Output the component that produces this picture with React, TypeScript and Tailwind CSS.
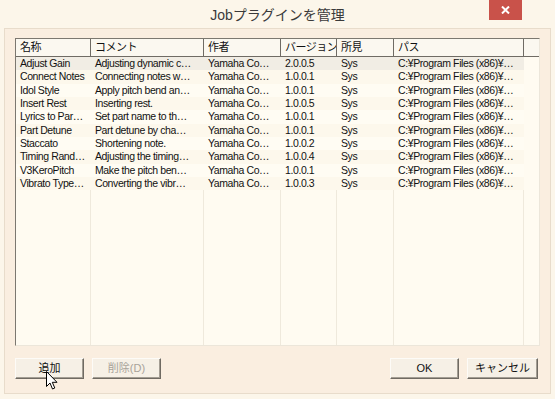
const cols = [
  { label: "名称", w: "w-[75px]" },
  { label: "コメント", w: "w-[113px]" },
  { label: "作者", w: "w-[77px]" },
  { label: "バージョン", w: "w-[56px]" },
  { label: "所見", w: "w-[57px]" },
  { label: "パス", w: "w-[130px]" },
];

const rows = [
  ["Adjust Gain", "Adjusting dynamic c…", "Yamaha Co…", "2.0.0.5", "Sys", "C:¥Program Files (x86)¥…"],
  ["Connect Notes", "Connecting notes w…", "Yamaha Co…", "1.0.0.1", "Sys", "C:¥Program Files (x86)¥…"],
  ["Idol Style", "Apply pitch bend an…", "Yamaha Co…", "1.0.0.1", "Sys", "C:¥Program Files (x86)¥…"],
  ["Insert Rest", "Inserting rest.", "Yamaha Co…", "1.0.0.5", "Sys", "C:¥Program Files (x86)¥…"],
  ["Lyrics to Par…", "Set part name to th…", "Yamaha Co…", "1.0.0.1", "Sys", "C:¥Program Files (x86)¥…"],
  ["Part Detune", "Part detune by cha…", "Yamaha Co…", "1.0.0.1", "Sys", "C:¥Program Files (x86)¥…"],
  ["Staccato", "Shortening note.", "Yamaha Co…", "1.0.0.2", "Sys", "C:¥Program Files (x86)¥…"],
  ["Timing Rand…", "Adjusting the timing…", "Yamaha Co…", "1.0.0.4", "Sys", "C:¥Program Files (x86)¥…"],
  ["V3KeroPitch", "Make the pitch ben…", "Yamaha Co…", "1.0.0.1", "Sys", "C:¥Program Files (x86)¥…"],
  ["Vibrato Type…", "Converting the vibr…", "Yamaha Co…", "1.0.0.3", "Sys", "C:¥Program Files (x86)¥…"],
];

function Button({ label, disabled, w }: { label: string; disabled?: boolean; w: string }) {
  return (
    <div
      className={`${w} h-[21px] flex items-center justify-center bg-[#f6f0e6] border border-t-[#fdfbf7] border-l-[#fdfbf7] border-r-[#6f6a62] border-b-[#6f6a62] shadow-[inset_-1px_-1px_0_#a39d93] ${
        disabled ? "text-[#a8a39a]" : "text-[#111]"
      }`}
    >
      {label}
    </div>
  );
}

export default function App() {
  return (
    <div
      className="w-[555px] h-[399px] bg-[#fcf6ea] flex flex-col text-[11px] text-[#111]"
      style={{ fontFamily: '"Liberation Sans", "Noto Sans CJK JP", sans-serif' }}
    >
      <div className="h-[28px] relative flex items-center justify-center shrink-0">
        <span className="text-[14px] text-[#3a3a3a] mt-[3px]">Jobプラグインを管理</span>
        <div className="absolute right-[33px] top-0 w-[33px] h-[20px] bg-[#c9524a] flex items-center justify-center">
          <svg width="9" height="8" viewBox="0 0 9 8">
            <path d="M1 0.5 L8 7.5 M8 0.5 L1 7.5" stroke="#fff" strokeWidth="2" />
          </svg>
        </div>
      </div>

      <div className="mx-[4px] mb-[5px] flex-1 border border-[#e8dccb] bg-[#faeee0] px-[10px] pt-[9px] flex flex-col">
        <div className="h-[308px] border border-t-[#7c7870] border-l-[#7c7870] border-r-[#ece6da] border-b-[#ece6da] bg-[#fffbf1] flex flex-col overflow-hidden">
          <div className="flex h-[18px] bg-[#fbf8f0] border-b border-[#6f6b64] shrink-0">
            {cols.map((c) => (
              <div
                key={c.label}
                className={`${c.w} shrink-0 border-r border-[#6f6b64] pl-[4px] flex items-center whitespace-nowrap overflow-hidden tracking-[-0.5px]`}
              >
                {c.label}
              </div>
            ))}
            <div className="w-[16px] shrink-0 border-r border-[#6f6b64]" />
          </div>
          <div className="relative flex-1">
            <div className="absolute inset-0 flex pointer-events-none">
              {cols.map((c) => (
                <div key={c.label} className={`${c.w} shrink-0 border-r border-[#efe9dc]`} />
              ))}
            </div>
            <div className="relative flex flex-col text-[10.5px] tracking-[-0.4px]">
              {rows.map((r, i) => (
                <div
                  key={r[0]}
                  className={`flex h-[13.33px] items-center w-[508px] ${
                    i === 0 ? "bg-[#f1ede4]" : i % 2 === 1 ? "bg-[#fdf8ec]" : "bg-[#fffcf3]"
                  }`}
                >
                  {r.map((v, j) => (
                    <div
                      key={j}
                      className={`${cols[j].w} shrink-0 pl-[4px] whitespace-nowrap overflow-hidden leading-[13px]`}
                    >
                      {v}
                    </div>
                  ))}
                </div>
              ))}
            </div>
          </div>
        </div>

        <div className="mt-[12px] flex items-center">
          <div className="relative">
            <Button label="追加" w="w-[69px]" />
            <svg className="absolute left-[31px] top-[13px]" width="13" height="20" viewBox="0 0 13 20">
              <path d="M0.5 0.5 L0.5 15.5 L4 12 L6.5 18 L8.8 17 L6.3 11.3 L11 11.3 Z" fill="#fff" stroke="#000" strokeWidth="1" />
            </svg>
          </div>
          <div className="ml-[8px]">
            <Button label="削除(D)" disabled w="w-[69px]" />
          </div>
          <div className="ml-auto">
            <Button label="OK" w="w-[69px]" />
          </div>
          <div className="ml-[8px] mr-[2px]">
            <Button label="キャンセル" w="w-[71px]" />
          </div>
        </div>
      </div>
    </div>
  );
}
